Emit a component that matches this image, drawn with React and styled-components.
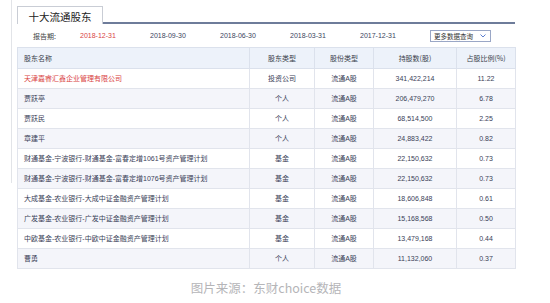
import React from "react";
import styled, { createGlobalStyle } from "styled-components";

const GlobalStyle = createGlobalStyle`
  html, body {
    margin: 0;
    padding: 0;
    background: #ffffff;
  }
  body {
    font-family: "Liberation Sans", "Noto Sans CJK SC", sans-serif;
    color: #333;
  }
`;

const Page = styled.div`
  position: relative;
  width: 550px;
  height: 303px;
  box-sizing: border-box;
  padding: 6px 0 0 17px;
  overflow: hidden;

  &::before {
    content: "";
    position: absolute;
    left: 11px;
    top: 0;
    width: 1px;
    height: 183px;
    background: #e2e4e8;
  }
`;

const TabBar = styled.div`
  display: flex;
  width: 498px;
  height: 18px;
`;

const Tab = styled.div`
  width: 86px;
  box-sizing: border-box;
  border: 1px solid #c9cdd5;
  border-bottom: none;
  background: #fff;
  display: flex;
  align-items: center;
  justify-content: center;
  font-family: "Noto Sans CJK SC", sans-serif;
  font-size: 10.5px;
  color: #222;
  padding-top: 1px;
`;

const TabLine = styled.div`
  flex: 1;
  border-bottom: 2px solid #6e7c9a;
`;

const PeriodRow = styled.div`
  display: flex;
  align-items: center;
  width: 498px;
  height: 23px;
  font-size: 7px;
`;

const PeriodLabel = styled.div`
  width: 63px;
  padding-left: 16px;
  box-sizing: border-box;
  color: #444;
  font-family: "Noto Sans CJK SC", sans-serif;
`;

const DateItem = styled.div`
  width: 70px;
  color: ${(p) => (p.active ? "#d9443f" : "#3c4660")};
`;

const Select = styled.div`
  width: 61px;
  height: 12px;
  box-sizing: border-box;
  border: 1px solid #9aa7c6;
  display: flex;
  align-items: center;
  justify-content: space-between;
  padding: 0 4px 0 3px;
  font-family: "Noto Sans CJK SC", sans-serif;
  font-size: 6.5px;
  color: #333;
  background: #fff;
`;

const Table = styled.table`
  width: 498px;
  border-collapse: collapse;
  table-layout: fixed;
  font-size: 7px;
  line-height: 9px;
`;

const Th = styled.th`
  height: 20px;
  padding: 0 6px;
  background: #edf2fa;
  border: 1px solid #dbe1ec;
  font-weight: normal;
  color: #3a3f4c;
  text-align: ${(p) => (p.left ? "left" : "center")};
  font-family: "Noto Sans CJK SC", sans-serif;
`;

const Tr = styled.tr`
  background: ${(p) => (p.striped ? "#f4f5fa" : "#ffffff")};
`;

const Td = styled.td`
  height: 19px;
  padding: 0 6px;
  border: 1px solid #e1e4ec;
  text-align: ${(p) => (p.left ? "left" : "center")};
  color: ${(p) => (p.red ? "#d9443f" : "#3a4158")};
  white-space: nowrap;
  overflow: hidden;
`;

const Caption = styled.div`
  width: 498px;
  margin-top: 11px;
  text-align: center;
  font-family: "Noto Sans CJK SC", sans-serif;
  font-size: 12.5px;
  color: #b5b5b8;
  line-height: 16px;
`;

const dates = ["2018-12-31", "2018-09-30", "2018-06-30", "2018-03-31", "2017-12-31"];

const rows = [
  ["天津嘉睿汇鑫企业管理有限公司", "投资公司", "341,422,214", "11.22"],
  ["贾跃亭", "个人", "206,479,270", "6.78"],
  ["贾跃民", "个人", "68,514,500", "2.25"],
  ["章建平", "个人", "24,883,422", "0.82"],
  ["财通基金-宁波银行-财通基金-富春定增1061号资产管理计划", "基金", "22,150,632", "0.73"],
  ["财通基金-宁波银行-财通基金-富春定增1076号资产管理计划", "基金", "22,150,632", "0.73"],
  ["大成基金-农业银行-大成中证金融资产管理计划", "基金", "18,606,848", "0.61"],
  ["广发基金-农业银行-广发中证金融资产管理计划", "基金", "15,168,568", "0.50"],
  ["中欧基金-农业银行-中欧中证金融资产管理计划", "基金", "13,479,168", "0.44"],
  ["曹勇", "个人", "11,132,060", "0.37"],
];

const Chevron = () => (
  <svg width="6" height="4" viewBox="0 0 6 4">
    <polyline points="0.5,0.5 3,3 5.5,0.5" fill="none" stroke="#5d7fd0" strokeWidth="1" />
  </svg>
);

export default function App() {
  return (
    <Page>
      <GlobalStyle />
      <TabBar>
        <Tab>十大流通股东</Tab>
        <TabLine />
      </TabBar>
      <PeriodRow>
        <PeriodLabel>报告期:</PeriodLabel>
        {dates.map((d, i) => (
          <DateItem key={d} active={i === 0}>
            {d}
          </DateItem>
        ))}
        <Select>
          <span>更多数据查询</span>
          <Chevron />
        </Select>
      </PeriodRow>
      <Table>
        <colgroup>
          <col style={{ width: 232 }} />
          <col style={{ width: 65 }} />
          <col style={{ width: 59 }} />
          <col style={{ width: 83 }} />
          <col style={{ width: 59 }} />
        </colgroup>
        <thead>
          <tr>
            <Th left>股东名称</Th>
            <Th>股东类型</Th>
            <Th>股份类型</Th>
            <Th>持股数(股)</Th>
            <Th>占股比例(%)</Th>
          </tr>
        </thead>
        <tbody>
          {rows.map((r, i) => (
            <Tr key={i} striped={i % 2 === 1}>
              <Td left red={i === 0}>{r[0]}</Td>
              <Td>{r[1]}</Td>
              <Td>流通A股</Td>
              <Td>{r[2]}</Td>
              <Td>{r[3]}</Td>
            </Tr>
          ))}
        </tbody>
      </Table>
      <Caption>图片来源：东财choice数据</Caption>
    </Page>
  );
}
